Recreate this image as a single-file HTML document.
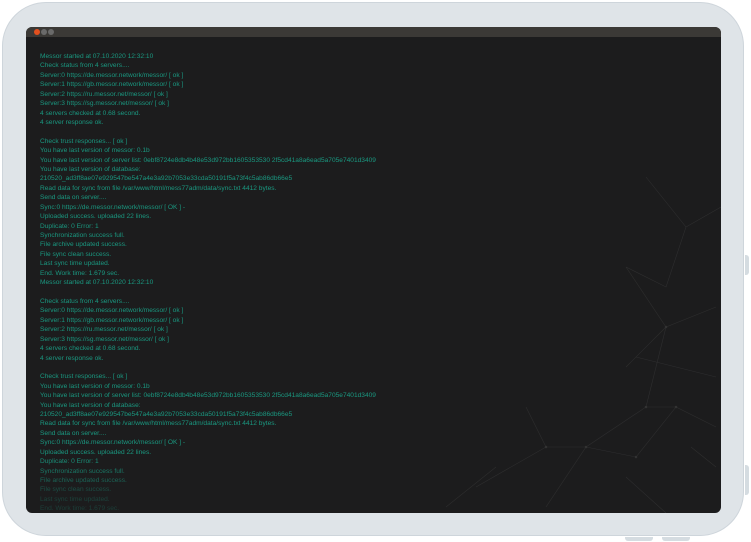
<!DOCTYPE html>
<html><head><meta charset="utf-8"><style>
html,body{margin:0;padding:0;width:751px;height:542px;background:#fff;overflow:hidden}
.frame{position:absolute;left:2px;top:2px;width:742px;height:534px;background:#dfe4e8;border:1px solid #ced5db;border-radius:44px;box-sizing:border-box}
.btn{position:absolute;background:#d5dce1}
.screen{position:absolute;left:26px;top:27px;width:695px;height:486px;background:#1c1c1d;border-radius:6px;overflow:hidden}
.bar{height:10px;background:#3b3936;position:relative}
.dot{position:absolute;top:2px;width:6px;height:6px;border-radius:50%;background:#6a6a6a}
.log{position:absolute;left:14px;top:25px;font:6.6px/9.42px "Liberation Sans",sans-serif;color:#1a9880;white-space:pre;
-webkit-mask-image:linear-gradient(#000 0,#000 405px,rgba(0,0,0,.35) 440px,rgba(0,0,0,.15) 480px);mask-image:linear-gradient(#000 0,#000 405px,rgba(0,0,0,.35) 440px,rgba(0,0,0,.15) 480px)}
svg{position:absolute;left:0;top:0}
</style></head><body>
<div class="frame"></div>
<div class="btn" style="left:745px;top:255px;width:4px;height:20px;border-radius:0 3px 3px 0"></div>
<div class="btn" style="left:745px;top:465px;width:4px;height:30px;border-radius:0 3px 3px 0"></div>
<div class="btn" style="left:625px;top:537px;width:28px;height:4px;border-radius:0 0 3px 3px"></div>
<div class="btn" style="left:662px;top:537px;width:28px;height:4px;border-radius:0 0 3px 3px"></div>
<div class="screen">
<div class="bar"><div class="dot" style="left:8px;background:#e2501f"></div><div class="dot" style="left:15px"></div><div class="dot" style="left:22px"></div></div>
<svg width="695" height="486" stroke="#2e2e2f" stroke-width="0.6" fill="none">
<path d="M600 240 L640 300 L690 280 M640 300 L620 380 L560 420 L520 480 M560 420 L610 430 L650 380 L690 400 M620 380 L650 380 M450 460 L520 420 L560 420 M520 420 L500 380 M610 330 L690 350 M640 300 L600 340 M420 480 L470 440 M665 420 L690 440 M600 450 L640 486 M620 150 L660 200 L695 180 M660 200 L640 260 L600 240"/>
<g fill="#3a3a3a"><circle cx="640" cy="300" r="1"/><circle cx="620" cy="380" r="1"/><circle cx="560" cy="420" r="1"/><circle cx="650" cy="380" r="1"/><circle cx="520" cy="420" r="1"/><circle cx="610" cy="430" r="1"/></g>
</svg>
<div class="log">Messor started at 07.10.2020 12:32:10
Check status from 4 servers....
Server:0 https://de.messor.network/messor/ [ ok ]
Server:1 https://gb.messor.network/messor/ [ ok ]
Server:2 https://ru.messor.net/messor/ [ ok ]
Server:3 https://sg.messor.net/messor/ [ ok ]
4 servers checked at 0.68 second.
4 server response ok.

Check trust responses... [ ok ]
You have last version of messor: 0.1b
You have last version of server list: 0ebf8724e8db4b48e53d972bb1605353530 2f5cd41a8a6ead5a705e7401d3409
You have last version of database:
210520_ad3ff8ae07e929547be547a4e3a92b7053e33cda50191f5a73f4c5ab86db66e5
Read data for sync from file /var/www/html/mess77adm/data/sync.txt 4412 bytes.
Send data on server....
Sync:0 https://de.messor.network/messor/ [ OK ] -
Uploaded success. uploaded 22 lines.
Duplicate: 0 Error: 1
Synchronization success full.
File archive updated success.
File sync clean success.
Last sync time updated.
End. Work time: 1.679 sec.
Messor started at 07.10.2020 12:32:10

Check status from 4 servers....
Server:0 https://de.messor.network/messor/ [ ok ]
Server:1 https://gb.messor.network/messor/ [ ok ]
Server:2 https://ru.messor.net/messor/ [ ok ]
Server:3 https://sg.messor.net/messor/ [ ok ]
4 servers checked at 0.68 second.
4 server response ok.

Check trust responses... [ ok ]
You have last version of messor: 0.1b
You have last version of server list: 0ebf8724e8db4b48e53d972bb1605353530 2f5cd41a8a6ead5a705e7401d3409
You have last version of database:
210520_ad3ff8ae07e929547be547a4e3a92b7053e33cda50191f5a73f4c5ab86db66e5
Read data for sync from file /var/www/html/mess77adm/data/sync.txt 4412 bytes.
Send data on server....
Sync:0 https://de.messor.network/messor/ [ OK ] -
Uploaded success. uploaded 22 lines.
Duplicate: 0 Error: 1
Synchronization success full.
File archive updated success.
File sync clean success.
Last sync time updated.
End. Work time: 1.679 sec.</div>
</div>
</body></html>
